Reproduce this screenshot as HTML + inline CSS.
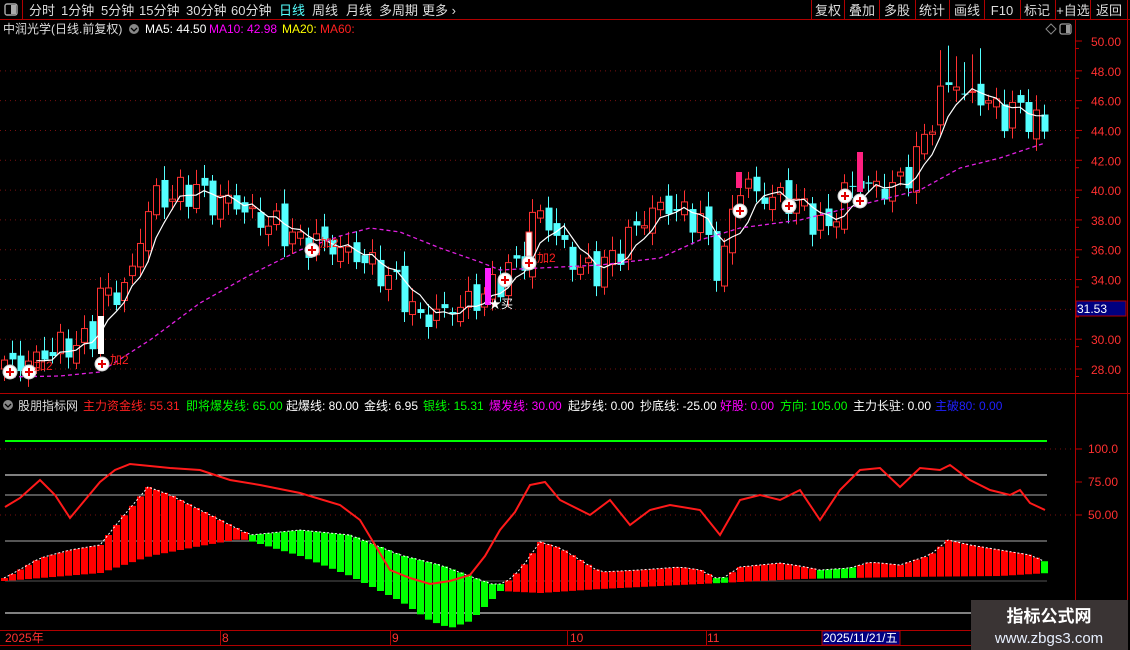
<!DOCTYPE html>
<html><head><meta charset="utf-8">
<style>
html,body{margin:0;padding:0;background:#000;width:1130px;height:650px;overflow:hidden;font-family:"Liberation Sans","Noto Sans CJK SC",sans-serif}
svg{position:absolute;left:0;top:0}
text{font-family:"Liberation Sans","Noto Sans CJK SC",sans-serif}
</style></head><body>
<svg id="s" width="1130" height="650" xmlns="http://www.w3.org/2000/svg">
<rect x="0" y="0" width="1130" height="20" fill="#000"/>
<line x1="0" y1="19.5" x2="1130" y2="19.5" stroke="#b00000"/>
<line x1="22.5" y1="0" x2="22.5" y2="20" stroke="#b00000"/>
<rect x="5" y="4" width="12" height="11" rx="2" fill="none" stroke="#aaa" stroke-width="1.4"/><rect x="11" y="5" width="5" height="9" fill="#aaa"/>
<g font-size="13" fill="#ddd">
<text x="29" y="15">分时</text><text x="61" y="15">1分钟</text><text x="101" y="15">5分钟</text><text x="139" y="15">15分钟</text><text x="186" y="15">30分钟</text><text x="231" y="15">60分钟</text><text x="279" y="15" fill="#54ffff">日线</text><text x="312" y="15">周线</text><text x="346" y="15">月线</text><text x="379" y="15">多周期</text><text x="422" y="15">更多 ›</text>
</g>
<g stroke="#b00000"><line x1="811.5" y1="0" x2="811.5" y2="20"/><line x1="844.5" y1="0" x2="844.5" y2="20"/><line x1="879.5" y1="0" x2="879.5" y2="20"/><line x1="915.5" y1="0" x2="915.5" y2="20"/><line x1="949.5" y1="0" x2="949.5" y2="20"/><line x1="984.5" y1="0" x2="984.5" y2="20"/><line x1="1020.5" y1="0" x2="1020.5" y2="20"/><line x1="1055.5" y1="0" x2="1055.5" y2="20"/><line x1="1090.5" y1="0" x2="1090.5" y2="20"/><line x1="1127.5" y1="0" x2="1127.5" y2="650"/></g>
<g font-size="13" fill="#ddd" text-anchor="middle">
<text x="828" y="15">复权</text><text x="862" y="15">叠加</text><text x="897" y="15">多股</text><text x="932" y="15">统计</text><text x="967" y="15">画线</text><text x="1002" y="15">F10</text><text x="1037" y="15">标记</text><text x="1073" y="15">+自选</text><text x="1109" y="15">返回</text>
</g>
<g font-size="12">
<text x="3" y="33" fill="#ddd">中润光学(日线.前复权)</text>
<circle cx="134" cy="29" r="5" fill="#888"/><path d="M131 28l3 3 3-3" stroke="#000" fill="none" stroke-width="1.3"/>
<text x="145" y="33" fill="#fff">MA5: 44.50</text><text x="209" y="33" fill="#ff00ff">MA10: 42.98</text><text x="282" y="33" fill="#ffff00">MA20:</text><text x="320" y="33" fill="#ff2020">MA60:</text>
</g>
<path d="M1046 29l5-5 5 5-5 5z" fill="none" stroke="#888"/>
<rect x="1060" y="24" width="11" height="10" rx="2" fill="none" stroke="#999" stroke-width="1.3"/><rect x="1066" y="25" width="4" height="8" fill="#999"/>
<line x1="1075.5" y1="20" x2="1075.5" y2="630" stroke="#b00000"/>
<line x1="0" y1="393.5" x2="1130" y2="393.5" stroke="#b00000"/>
<line x1="0" y1="630.5" x2="975" y2="630.5" stroke="#b00000"/>
<line x1="0" y1="645.5" x2="975" y2="645.5" stroke="#b00000"/>
<g id="grid"></g>
<g id="lower"></g>
<g id="candles"></g>
<rect x="1076" y="301" width="50" height="15" fill="#000080" stroke="#b00000"/>
<text x="1077" y="313" font-size="12" fill="#fff">31.53</text>
<g font-size="12">
<circle cx="8" cy="405" r="5" fill="#888"/><path d="M5 404l3 3 3-3" stroke="#000" fill="none" stroke-width="1.3"/>
<text x="18" y="410" fill="#ddd">股朋指标网</text>
<text x="83" y="410" fill="#ff2020">主力资金线: 55.31</text>
<text x="186" y="410" fill="#00ff00">即将爆发线: 65.00</text>
<text x="286" y="410" fill="#fff">起爆线: 80.00</text>
<text x="364" y="410" fill="#fff">金线: 6.95</text>
<text x="423" y="410" fill="#00ff00">银线: 15.31</text>
<text x="489" y="410" fill="#ff00ff">爆发线: 30.00</text>
<text x="568" y="410" fill="#fff">起步线: 0.00</text>
<text x="640" y="410" fill="#fff">抄底线: -25.00</text>
<text x="720" y="410" fill="#ff00ff">好股: 0.00</text>
<text x="780" y="410" fill="#00ff00">方向: 105.00</text>
<text x="853" y="410" fill="#fff">主力长驻: 0.00</text>
<text x="935" y="410" fill="#2020ff">主破80: 0.00</text>
</g>
<g font-size="12" fill="#ff3030"><text x="1088" y="453">100.0</text><text x="1088" y="486">75.00</text><text x="1088" y="519">50.00</text></g>
<g font-size="12" fill="#ff3030"><text x="5" y="642">2025年</text><text x="222" y="642">8</text><text x="392" y="642">9</text><text x="570" y="642">10</text><text x="707" y="642">11</text></g>
<g stroke="#b00000"><line x1="220.5" y1="630" x2="220.5" y2="645"/><line x1="390.5" y1="630" x2="390.5" y2="645"/><line x1="567.5" y1="630" x2="567.5" y2="645"/><line x1="706.5" y1="630" x2="706.5" y2="645"/></g>
<rect x="822" y="631" width="78" height="14" fill="#000080" stroke="#b00000"/>
<text x="823" y="642" font-size="12" fill="#fff">2025/11/21/五</text>
<rect x="971" y="600" width="157" height="50" fill="#3a3434"/>
<text x="1049" y="622" font-size="17" font-weight="bold" fill="#fff" text-anchor="middle">指标公式网</text>
<text x="1049" y="643" font-size="15" fill="#e8f0ff" text-anchor="middle">www.zbgs3.com</text>
</svg>
<script>
(function(){
var NS="http://www.w3.org/2000/svg";
function el(p,t,a){var e=document.createElementNS(NS,t);for(var k in a)e.setAttribute(k,a[k]);p.appendChild(e);return e;}
function interp(pts,x){if(x<=pts[0][0])return pts[0][1];for(var i=1;i<pts.length;i++){if(x<=pts[i][0]){var a=pts[i-1],b=pts[i];return a[1]+(b[1]-a[1])*(x-a[0])/(b[0]-a[0]);}}return pts[pts.length-1][1];}
function Y(p){return 41+(50-p)*14.91;}
var grid=document.getElementById('grid');
for(var p=28;p<=50;p+=2){var y=Y(p);
 if(p<50)el(grid,'line',{x1:0,y1:y,x2:1075,y2:y,stroke:'#7a1010','stroke-dasharray':'1,4'});
 el(grid,'line',{x1:1075,y1:y,x2:1082,y2:y,stroke:'#c00000'});
 el(grid,'line',{x1:1075,y1:y+7.45,x2:1079,y2:y+7.45,stroke:'#c00000'});
 if(p!=32){var t=el(grid,'text',{x:1091,y:y+5,'font-size':12,fill:'#ff3030'});t.textContent=p.toFixed(2);}
}
var L=document.getElementById('lower');
el(L,'line',{x1:5,y1:441,x2:1047,y2:441,stroke:'#00ff00','stroke-width':2});
[449,515].forEach(function(y){el(L,'line',{x1:0,y1:y,x2:1075,y2:y,stroke:'#7a1010','stroke-dasharray':'1,4'});});
el(L,'line',{x1:5,y1:475,x2:1047,y2:475,stroke:'#fff'});
el(L,'line',{x1:5,y1:495,x2:1047,y2:495,stroke:'#aaa'});
el(L,'line',{x1:5,y1:541,x2:1047,y2:541,stroke:'#aaa'});
el(L,'line',{x1:5,y1:581,x2:1047,y2:581,stroke:'#555'});
el(L,'line',{x1:5,y1:613,x2:1047,y2:613,stroke:'#fff'});
[449,482,515].forEach(function(y){el(L,'line',{x1:1075,y1:y,x2:1082,y2:y,stroke:'#c00000'});});
var topC=[[5,578],[40,558],[70,550],[100,545],[120,520],[148,487],[170,495],[200,510],[240,530],[250,535],[300,530],[350,535],[400,555],[440,565],[480,580],[495,585],[505,583],[520,570],[540,542],[560,548],[580,560],[600,572],[640,570],[680,567],[700,570],[720,580],[740,567],[780,563],[800,566],[820,570],[850,568],[870,562],[900,565],[930,555],[948,540],[970,545],[1000,550],[1030,555],[1048,563]];
var botC=[[5,580],[100,572],[150,555],[200,545],[240,538],[250,540],[300,555],[350,575],[400,600],[430,620],[450,627],[470,620],[490,600],[500,590],[540,592],[600,588],[660,585],[720,582],[800,578],[900,576],[1000,575],[1048,572]];
var tl=[];
for(var x=4;x<=1048;x+=8){var t1=interp(topC,x),b1=interp(botC,x);
 var green=(x>248&&x<502)||(x>712&&x<730)||(x>815&&x<856)||x>1040;
 el(L,'rect',{x:x-3,y:Math.min(t1,b1),width:7,height:Math.abs(b1-t1)+1,fill:green?'#00ff00':'#ff0000'});tl.push(x+','+t1);}
el(L,'polyline',{points:tl.join(' '),fill:'none',stroke:'#fff','stroke-width':1,'stroke-dasharray':'2,2'});
var redL=[[5,507],[20,498],[40,480],[55,495],[70,518],[85,500],[100,482],[115,470],[130,464],[150,466],[170,468],[200,470],[230,480],[260,485],[300,493],[340,505],[360,520],[375,545],[390,570],[410,578],[430,584],[450,581],[470,575],[485,556],[500,530],[515,512],[530,485],[545,482],[560,500],[590,515],[610,500],[630,525],[650,510],[670,505],[700,510],[720,535],[740,500],[760,495],[780,500],[800,490],[820,520],[840,490],[860,470],[880,468],[900,487],[920,468],[940,470],[950,465],[970,480],[990,490],[1010,495],[1020,490],[1030,503],[1045,510]];
el(L,'polyline',{points:redL.map(function(a){return a.join(',')}).join(' '),fill:'none',stroke:'#ff1a1a','stroke-width':2});
var C=document.getElementById('candles');
var key=[[4,28.2],[30,28.5],[60,29.5],[90,29.8],[100,33],[120,33],[135,35],[145,38.5],[155,39.5],[170,39.5],[185,40],[200,40],[215,39],[230,39.5],[245,38.5],[260,38],[280,37.5],[300,36.5],[320,36.5],[340,36],[360,35.5],[380,34.5],[400,33.5],[415,31.5],[430,31.5],[450,32],[470,32.5],[485,33],[500,34],[515,35],[525,35.5],[535,39],[545,38],[560,36.5],[575,35],[590,34.5],[605,35],[620,36],[635,37.5],[650,38.5],[665,39],[680,38.5],[700,38],[715,35],[725,35.5],[735,40],[745,40.5],[760,39.5],[780,39.5],[800,39],[815,38],[825,37],[835,38.5],[845,40],[860,40.5],[880,40],[900,40.5],[915,42],[930,44.5],[945,47],[955,47.5],[965,46],[975,46.5],[985,46],[995,45.5],[1005,45],[1020,45.5],[1035,44.5],[1045,44]];
var closes=[],xs=[],prev=28;
for(var i=0;i<131;i++){var x=4+8*i;var c=interp(key,x)+0.8*Math.sin(i*2.1)+0.4*Math.cos(i*3.7);
 var o=prev+0.5*Math.sin(i*1.3);var h=Math.max(o,c)+0.3+0.7*Math.abs(Math.sin(i*2.3));var l=Math.min(o,c)-0.3-0.5*Math.abs(Math.cos(i*1.9));
 if(x>=940&&x<=980)h+=1.5;
 var up=c>=o;var col=up?'#ff3232':'#54ffff';
 el(C,'line',{x1:x+0.5,y1:Y(h),x2:x+0.5,y2:Y(l),stroke:col});
 var yt=Y(Math.max(o,c)),yb=Y(Math.min(o,c));
 if(up)el(C,'rect',{x:x-2.5,y:yt,width:6,height:Math.max(1,yb-yt),fill:'#000',stroke:col});
 else el(C,'rect',{x:x-2.5,y:yt,width:7,height:Math.max(1,yb-yt),fill:col});
 closes.push(c);xs.push(x);prev=c;}
var ma=[];for(var i=4;i<131;i++){var s=0;for(var j=0;j<5;j++)s+=closes[i-j];ma.push(xs[i]+','+Y(s/5).toFixed(1));}
el(C,'polyline',{points:ma.join(' '),fill:'none',stroke:'#fff','stroke-width':1.2});
var m60=[[5,377],[60,376],[100,372],[150,340],[200,303],[250,275],[300,250],[340,236],[370,228],[400,232],[440,248],[480,262],[500,270],[540,268],[600,265],[660,258],[700,240],[740,228],[800,220],[860,205],[920,190],[960,168],[1000,158],[1045,143]];
el(C,'polyline',{points:m60.map(function(a){return a.join(',')}).join(' '),fill:'none',stroke:'#e020e0','stroke-width':1.3,'stroke-dasharray':'4,3'});
el(C,'rect',{x:98,y:316,width:6,height:38,fill:'#fff'});
el(C,'rect',{x:485,y:268,width:6,height:37,fill:'#ff20ff'});
el(C,'rect',{x:526,y:232,width:6,height:28,fill:'#fff',stroke:'#ff3232'});
el(C,'rect',{x:736,y:172,width:6,height:16,fill:'#ff2080'});
el(C,'rect',{x:857,y:152,width:6,height:40,fill:'#ff2080'});
[[10,372],[29,372],[102,364],[312,250],[505,280],[529,263],[740,211],[789,206],[845,196],[860,201]].forEach(function(a){
 el(C,'circle',{cx:a[0],cy:a[1],r:7,fill:'#fff',stroke:'#ccc'});
 el(C,'path',{d:'M'+(a[0]-4)+' '+a[1]+'h8M'+a[0]+' '+(a[1]-4)+'v8',stroke:'#e00000','stroke-width':2});});
[[110,364,'加2'],[34,370,'加2'],[537,262,'加2'],[320,247,'加2']].forEach(function(a){var t=el(C,'text',{x:a[0],y:a[1],'font-size':12,fill:'#ff2020'});t.textContent=a[2];});
var b=el(C,'text',{x:489,y:308,'font-size':12,fill:'#fff'});b.textContent='★买';
})();
</script>
</body></html>
